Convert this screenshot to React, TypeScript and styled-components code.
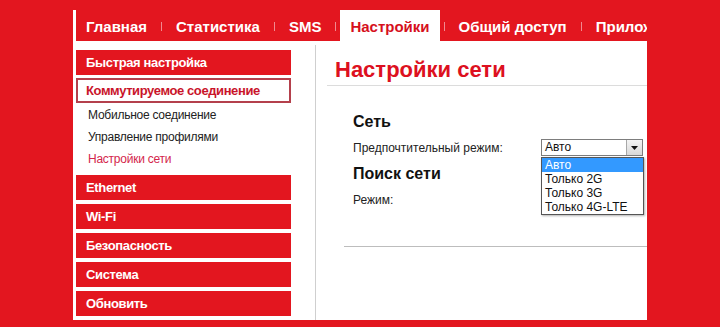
import { FC } from 'react';
import styled, { createGlobalStyle } from 'styled-components';

const RED = '#e3161f';

const GlobalStyle = createGlobalStyle`
  html, body {
    margin: 0;
    padding: 0;
    background: ${ RED };
    font-family: Arial, 'Liberation Sans', sans-serif;
  }
`;

const navItems = ['Главная', 'Статистика', 'SMS', 'Настройки', 'Общий доступ', 'Приложения'];
const activeNav = 'Настройки';

const sideTop = ['Быстрая настройка'];
const sideBottom = ['Ethernet', 'Wi-Fi', 'Безопасность', 'Система', 'Обновить'];
const subItems = [
  { label: 'Мобильное соединение', active: false },
  { label: 'Управление профилями', active: false },
  { label: 'Настройки сети', active: true },
];
const modes = ['Авто', 'Только 2G', 'Только 3G', 'Только 4G-LTE'];

const App: FC = () => {
  return (
    <>
      <GlobalStyle />
      <Page>
        <NavBar>
          { navItems.map((item, i) => (
            <NavGroup key={ item }>
              { i > 0 && <NavSep /> }
              <NavTab $active={ item === activeNav }>{ item }</NavTab>
            </NavGroup>
          )) }
        </NavBar>
        <Body>
          <Sidebar>
            { sideTop.map(item => <SideBar key={ item }>{ item }</SideBar>) }
            <SideOutlined>Коммутируемое соединение</SideOutlined>
            <SubList>
              { subItems.map(sub => <SubItem key={ sub.label } $active={ sub.active }>{ sub.label }</SubItem>) }
            </SubList>
            <SideStack>
              { sideBottom.map(item => <SideBar key={ item }>{ item }</SideBar>) }
            </SideStack>
          </Sidebar>
          <Main>
            <Title>Настройки сети</Title>
            <Section>
              <Heading>Сеть</Heading>
              <FormRow>
                <Label>Предпочтительный режим:</Label>
                <SelectWrap>
                  <SelectBox>
                    <SelectValue>Авто</SelectValue>
                    <SelectArrow>
                      <svg width="7" height="4" viewBox="0 0 7 4"><path d="M0 0h7L3.5 4z" fill="#111" /></svg>
                    </SelectArrow>
                  </SelectBox>
                  <Options>
                    { modes.map((mode, i) => <Option key={ mode } $selected={ i === 0 }>{ mode }</Option>) }
                  </Options>
                </SelectWrap>
              </FormRow>
              <Heading $tight>Поиск сети</Heading>
              <FormRow>
                <Label>Режим:</Label>
              </FormRow>
            </Section>
            <BottomRule />
          </Main>
        </Body>
      </Page>
    </>
  );
};

const Page = styled.div`
  margin: 10px 0 0 73px;
  width: 574px;
  height: 310px;
  background: #fff;
  overflow: hidden;
  display: flex;
  flex-direction: column;
`;

const NavBar = styled.div`
  display: flex;
  align-items: stretch;
  height: 31px;
  margin-left: 3px;
  background: ${ RED };
  white-space: nowrap;
  width: 700px;
`;

const NavGroup = styled.div`
  display: flex;
  align-items: center;
`;

const NavSep = styled.span`
  width: 1px;
  height: 9px;
  margin: 2px 4px 0;
  background: #f08a8f;
`;

const NavTab = styled.div<{ $active: boolean }>`
  height: 100%;
  display: flex;
  align-items: center;
  padding: 1px 10px 0;
  box-sizing: border-box;
  font-size: 15px;
  font-weight: bold;
  color: ${ props => props.$active ? '#d6101c' : '#fff' };
  background: ${ props => props.$active ? '#fff' : 'transparent' };
`;

const Body = styled.div`
  display: flex;
  flex: 1;
`;

const Sidebar = styled.div`
  width: 215px;
  padding: 9px 24px 0 3px;
  display: flex;
  flex-direction: column;
`;

const SideBar = styled.div`
  height: 25px;
  line-height: 25px;
  padding-left: 10px;
  background: ${ RED };
  color: #fff;
  font-size: 13px;
  font-weight: bold;
  letter-spacing: -0.35px;
`;

const SideOutlined = styled.div`
  margin-top: 3px;
  height: 25px;
  box-sizing: border-box;
  line-height: 21px;
  padding-left: 8px;
  border: 2px solid #b4404c;
  color: #c9142a;
  font-size: 13px;
  font-weight: bold;
  letter-spacing: -0.4px;
`;

const SubList = styled.div`
  padding: 1px 0 5px 12px;
`;

const SubItem = styled.div<{ $active: boolean }>`
  height: 22px;
  line-height: 22px;
  font-size: 12px;
  letter-spacing: -0.25px;
  color: ${ props => props.$active ? '#d4264c' : '#222' };
`;

const SideStack = styled.div`
  display: flex;
  flex-direction: column;
  gap: 4px;
`;

const Main = styled.div`
  flex: 1;
  margin-top: 4px;
  border-left: 1px solid #cfcfcf;
  padding-top: 12px;
`;

const Title = styled.h1`
  margin: 0 0 0 11px;
  padding: 0 0 2px 8px;
  height: 26px;
  line-height: 26px;
  font-size: 22px;
  font-weight: bold;
  color: #dd1020;
  border-bottom: 1px solid #dcdcdc;
`;

const Section = styled.div`
  padding: 26px 0 0 37px;
`;

const Heading = styled.h2<{ $tight?: boolean }>`
  margin: ${ props => props.$tight ? '8px' : '0' } 0 0;
  height: 20px;
  line-height: 20px;
  font-size: 16px;
  font-weight: bold;
  color: #111;
`;

const FormRow = styled.div`
  margin-top: 7px;
  height: 17px;
  display: flex;
  align-items: center;
`;

const Label = styled.div`
  width: 188px;
  font-size: 12px;
  color: #222;
`;

const SelectWrap = styled.div`
  position: relative;
  width: 102px;
  height: 17px;
`;

const SelectBox = styled.div`
  height: 17px;
  box-sizing: border-box;
  border: 1px solid #7d7d7d;
  display: flex;
  align-items: stretch;
  background: #fff;
`;

const SelectValue = styled.div`
  flex: 1;
  padding-left: 3px;
  font-size: 12px;
  line-height: 15px;
  color: #111;
`;

const SelectArrow = styled.div`
  width: 15px;
  border-left: 1px solid #a8a8a8;
  background: linear-gradient(#f4f4f4, #d8d8d8);
  display: flex;
  align-items: center;
  justify-content: center;
`;

const Options = styled.div`
  position: absolute;
  top: 18px;
  left: 0;
  width: 103px;
  box-sizing: border-box;
  border: 1px solid #555;
  background: #fff;
  box-shadow: 1px 1px 2px rgba(0, 0, 0, 0.3);
  z-index: 2;
`;

const Option = styled.div<{ $selected: boolean }>`
  height: 14px;
  line-height: 14px;
  padding-left: 3px;
  font-size: 12px;
  color: ${ props => props.$selected ? '#fff' : '#111' };
  background: ${ props => props.$selected ? '#3399ff' : 'transparent' };
`;

const BottomRule = styled.div`
  margin: 38px 0 0 28px;
  border-top: 1px solid #bdbdbd;
`;

export default App;
